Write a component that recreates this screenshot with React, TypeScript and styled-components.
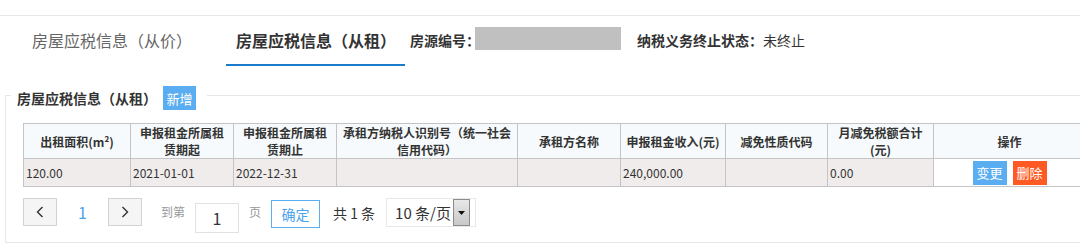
import React from "react";
import styled, { createGlobalStyle } from "styled-components";

const Global = createGlobalStyle`
  html, body {
    margin: 0;
    padding: 0;
    background: #fff;
    overflow: hidden;
    font-family: "Noto Sans CJK SC", "Microsoft YaHei", "Noto Sans", sans-serif;
    color: #333;
  }
`;

const Page = styled.div`
  width: 1080px;
  padding-top: 15px;
`;

const TabBar = styled.div`
  display: flex;
  align-items: stretch;
  height: 50px;
  border-top: 1px solid #e8e8e8;
  padding-left: 21px;
`;

const Tab = styled.div<{ $active?: boolean }>`
  display: flex;
  align-items: center;
  padding: ${(p) => (p.$active ? "0 9px 0 10px" : "0 11px")};
  margin-right: ${(p) => (p.$active ? "5px" : "23px")};
  font-size: 16px;
  font-weight: ${(p) => (p.$active ? 700 : 400)};
  color: ${(p) => (p.$active ? "#333" : "#666")};
  border-bottom: 2px solid ${(p) => (p.$active ? "#1a7bcc" : "transparent")};
  white-space: nowrap;
`;

const Info = styled.div`
  display: flex;
  align-items: center;
  font-size: 14px;
  font-weight: 700;
  color: #333;
  padding-bottom: 2px;
  white-space: nowrap;
`;

const Masked = styled.span`
  display: inline-block;
  width: 146px;
  height: 23px;
  background: #c0c0c0;
  margin: 0 16px 4px -5px;
`;

const Plain = styled.span`
  font-weight: 400;
`;

const Group = styled.fieldset`
  margin: 19px -30px 0 5px;
  padding: 18px 0 10px 17px;
  border: 1px solid #e6e6e6;
`;

const Legend = styled.legend`
  display: flex;
  align-items: center;
  height: 20px;
  padding: 0 11px 0 6px;
  margin-left: -12px;
`;

const LegendTitle = styled.span`
  font-size: 14px;
  font-weight: 700;
  color: #333;
  margin-top: 6px;
`;

const Btn = styled.button<{ $tone: "blue" | "red" }>`
  height: 24px;
  width: 34px;
  padding: 0;
  border: none;
  font-family: inherit;
  font-size: 13px;
  color: #fff;
  background: ${(p) => (p.$tone === "blue" ? "#5aadf1" : "#ff5a23")};
`;

const AddBtn = styled(Btn)`
  margin: 6px 0 0 6px;
  width: 33px;
`;

const Table = styled.table`
  width: 1062px;
  table-layout: fixed;
  border-collapse: collapse;
  border: 1px solid #b4b4b4;
  font-size: 12px;
`;

const Th = styled.th`
  height: 34px;
  padding: 0 4px;
  background: #f6fafc;
  border: 1px solid #c4c4c4;
  font-weight: 700;
  line-height: 17px;
  color: #333;
  text-align: center;
`;

const Td = styled.td<{ $plain?: boolean }>`
  height: 27px;
  padding: 0 2px;
  border: 1px solid #c4c4c4;
  background: ${(p) => (p.$plain ? "#fff" : "#f0ecec")};
  color: #333;
  text-align: left;
`;

const Actions = styled.div`
  display: flex;
  justify-content: center;
  gap: 6px;
`;

const Pager = styled.div`
  display: flex;
  align-items: flex-start;
  margin-top: 11px;
  height: 34px;
  font-size: 12px;
  white-space: nowrap;
`;

const PageBtn = styled.div`
  width: 32px;
  height: 26px;
  display: flex;
  align-items: center;
  justify-content: center;
  background: #f5f5f5;
  border: 1px solid #d2d2d2;
`;

const PageNum = styled.div`
  width: 51px;
  height: 28px;
  display: flex;
  align-items: center;
  justify-content: center;
  color: #4ba3ee;
  font-size: 16px;
`;

const Muted = styled.span<{ $l?: number }>`
  color: #999;
  line-height: 28px;
  margin: 0 10px 0 ${(p) => p.$l ?? 0}px;
`;

const JumpInput = styled.div`
  width: 42px;
  height: 28px;
  margin: 5px 10px 0 0;
  border: 1px solid #e2e2e2;
  display: flex;
  align-items: center;
  justify-content: center;
  font-size: 16px;
  color: #333;
`;

const Confirm = styled.div`
  width: 47px;
  height: 26px;
  margin: 2px 13px 0 0;
  border: 1px solid #5aadf1;
  color: #4ba3ee;
  display: flex;
  align-items: center;
  justify-content: center;
  font-size: 14px;
`;

const Total = styled.span`
  font-size: 14px;
  color: #333;
  line-height: 30px;
  margin-right: 11px;
`;

const Select = styled.div`
  width: 88px;
  height: 27px;
  border: 1px solid #e8e8e8;
  display: flex;
  align-items: stretch;
  font-size: 15px;
  color: #333;
`;

const SelectText = styled.span`
  flex: 1;
  display: flex;
  align-items: center;
  padding-left: 8px;
  white-space: nowrap;
`;

const Arrow = styled.span`
  width: 15px;
  margin-right: 5px;
  border: 1px solid #8c8c8c;
  background: linear-gradient(#e8e8e8, #c8c8c8);
  display: flex;
  align-items: center;
  justify-content: center;
`;

const Chevron = ({ left }: { left?: boolean }) => (
  <svg width="8" height="12" viewBox="0 0 8 12">
    <polyline
      points={left ? "6.5,1 1.5,6 6.5,11" : "1.5,1 6.5,6 1.5,11"}
      fill="none"
      stroke="#333"
      strokeWidth="1.4"
    />
  </svg>
);

const columns = [
  { w: 107, label: "出租面积(m²)" },
  { w: 103, label: "申报租金所属租赁期起" },
  { w: 103, label: "申报租金所属租赁期止" },
  { w: 181, label: "承租方纳税人识别号（统一社会信用代码）" },
  { w: 103, label: "承租方名称" },
  { w: 105, label: "申报租金收入(元)" },
  { w: 102, label: "减免性质代码" },
  { w: 106, label: "月减免税额合计(元)" },
  { w: 152, label: "操作" },
];

const row = ["120.00", "2021-01-01", "2022-12-31", "", "", "240,000.00", "", "0.00"];

export default function App() {
  return (
    <Page>
      <Global />
      <TabBar>
        <Tab>房屋应税信息（从价）</Tab>
        <Tab $active>房屋应税信息（从租）</Tab>
        <Info>
          房源编号：<Masked />
          纳税义务终止状态：<Plain>未终止</Plain>
        </Info>
      </TabBar>
      <Group>
        <Legend>
          <LegendTitle>房屋应税信息（从租）</LegendTitle>
          <AddBtn $tone="blue">新增</AddBtn>
        </Legend>
        <Table>
          <colgroup>
            {columns.map((c) => (
              <col key={c.label} style={{ width: c.w }} />
            ))}
          </colgroup>
          <thead>
            <tr>
              {columns.map((c) => (
                <Th key={c.label}>{c.label}</Th>
              ))}
            </tr>
          </thead>
          <tbody>
            <tr>
              {row.map((v, i) => (
                <Td key={i}>{v}</Td>
              ))}
              <Td $plain>
                <Actions>
                  <Btn $tone="blue">变更</Btn>
                  <Btn $tone="red">删除</Btn>
                </Actions>
              </Td>
            </tr>
          </tbody>
        </Table>
        <Pager>
          <PageBtn>
            <Chevron left />
          </PageBtn>
          <PageNum>1</PageNum>
          <PageBtn>
            <Chevron />
          </PageBtn>
          <Muted $l={19}>到第</Muted>
          <JumpInput>1</JumpInput>
          <Muted>页</Muted>
          <Confirm>确定</Confirm>
          <Total>共 1 条</Total>
          <Select>
            <SelectText>10 条/页</SelectText>
            <Arrow>
              <svg width="7" height="4" viewBox="0 0 7 4">
                <polygon points="0,0 7,0 3.5,4" fill="#111" />
              </svg>
            </Arrow>
          </Select>
        </Pager>
      </Group>
    </Page>
  );
}
